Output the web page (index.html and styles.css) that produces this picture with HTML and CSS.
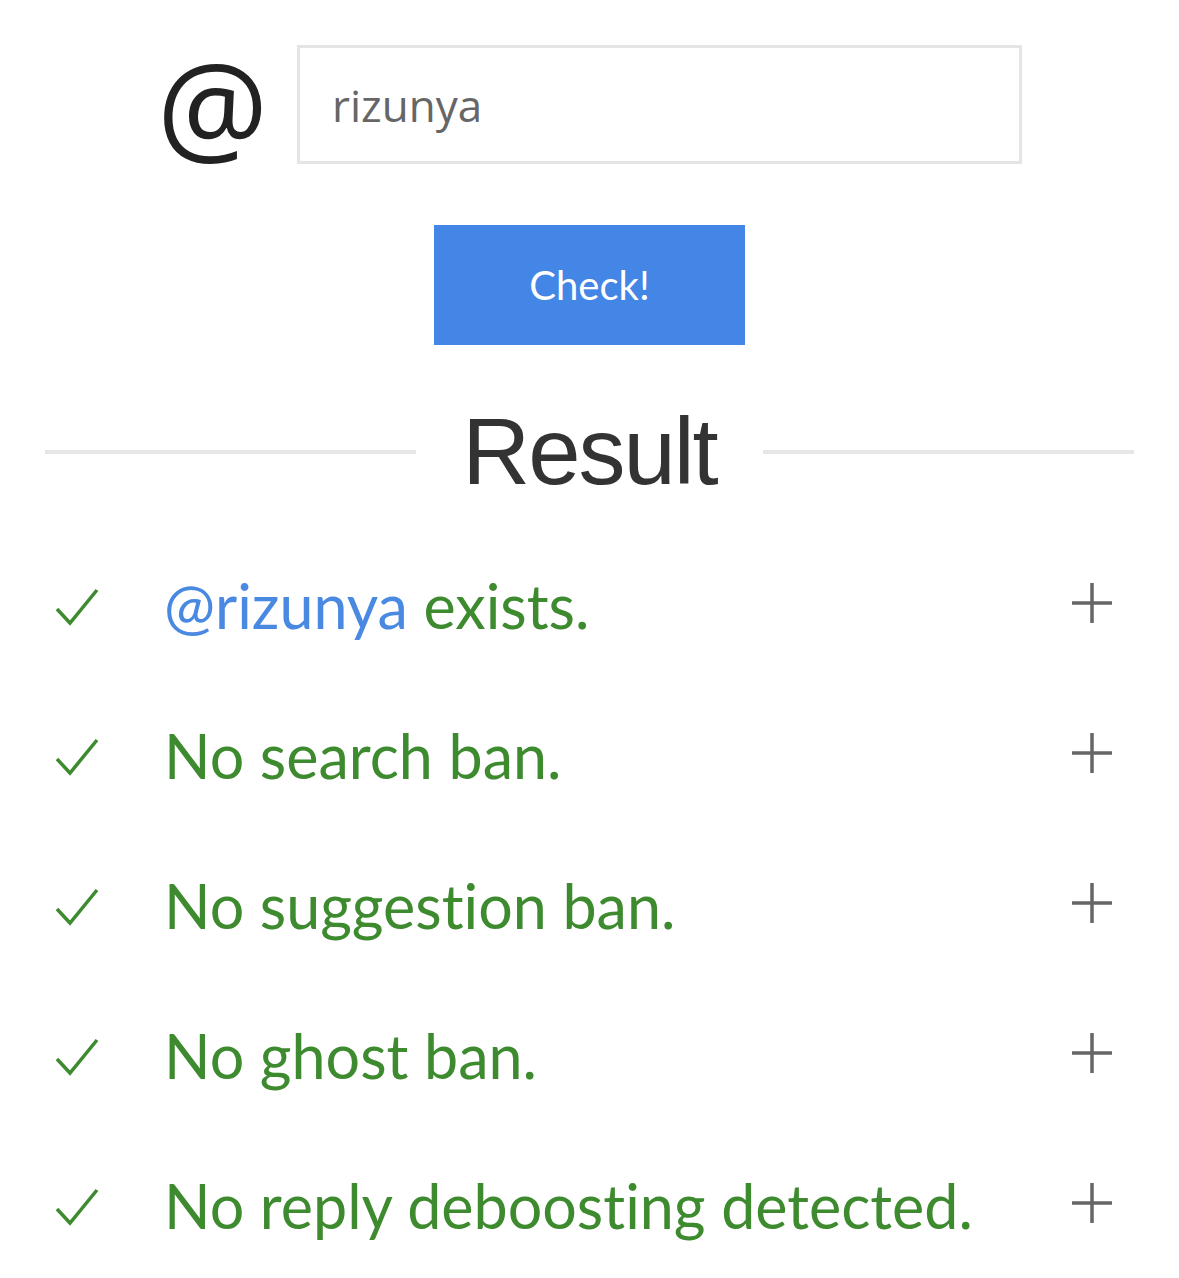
FILE: index.html
```html
<!DOCTYPE html>
<html lang="en">
<head>
<meta charset="utf-8">
<title>Shadowban check</title>
<link rel="stylesheet" href="styles.css">
</head>
<body>
<main class="page">
  <div class="search">
    <span class="at">@</span>
    <div class="input">rizunya</div>
  </div>
  <div class="actions">
    <button class="check" type="button">Check!</button>
  </div>
  <div class="divider">
    <span class="line"></span>
    <h2 class="title">Result</h2>
    <span class="line"></span>
  </div>
  <ul class="results">
    <li class="row">
      <svg class="tick" viewBox="0 0 44 40"><path d="M2 22 L15 36 L42 3"/></svg>
      <span class="text"><span class="user">@rizunya</span> exists.</span>
      <svg class="plus" viewBox="0 0 40 40"><path d="M20 0 V40 M0 20 H40"/></svg>
    </li>
    <li class="row">
      <svg class="tick" viewBox="0 0 44 40"><path d="M2 22 L15 36 L42 3"/></svg>
      <span class="text">No search ban.</span>
      <svg class="plus" viewBox="0 0 40 40"><path d="M20 0 V40 M0 20 H40"/></svg>
    </li>
    <li class="row">
      <svg class="tick" viewBox="0 0 44 40"><path d="M2 22 L15 36 L42 3"/></svg>
      <span class="text">No suggestion ban.</span>
      <svg class="plus" viewBox="0 0 40 40"><path d="M20 0 V40 M0 20 H40"/></svg>
    </li>
    <li class="row">
      <svg class="tick" viewBox="0 0 44 40"><path d="M2 22 L15 36 L42 3"/></svg>
      <span class="text">No ghost ban.</span>
      <svg class="plus" viewBox="0 0 40 40"><path d="M20 0 V40 M0 20 H40"/></svg>
    </li>
    <li class="row">
      <svg class="tick" viewBox="0 0 44 40"><path d="M2 22 L15 36 L42 3"/></svg>
      <span class="text">No reply deboosting detected.</span>
      <svg class="plus" viewBox="0 0 40 40"><path d="M20 0 V40 M0 20 H40"/></svg>
    </li>
  </ul>
</main>
</body>
</html>
```

FILE: styles.css
```css
html, body {
  margin: 0;
  padding: 0;
  background: #ffffff;
}

.page {
  width: 1179px;
  font-family: "Lato", "Open Sans", sans-serif;
  font-variant-ligatures: none;
}

.search {
  display: flex;
  justify-content: center;
  align-items: center;
  gap: 36px;
  padding-top: 45px;
}

.at {
  font-family: "Open Sans", sans-serif;
  font-size: 124px;
  line-height: 119px;
  color: #222222;
  width: 104px;
  text-align: center;
}

.input {
  box-sizing: border-box;
  width: 725px;
  height: 119px;
  border: 3px solid #e5e5e5;
  padding-left: 32px;
  display: flex;
  align-items: center;
  font-family: "Open Sans", sans-serif;
  font-size: 44px;
  color: #666666;
}

.actions {
  display: flex;
  justify-content: center;
  margin-top: 61px;
}

.check {
  width: 311px;
  height: 120px;
  border: none;
  background: #4486e6;
  color: #ffffff;
  font-family: "Lato", sans-serif;
  font-size: 40px;
  padding: 0;
}

.divider {
  display: flex;
  align-items: center;
  padding: 0 45px;
  margin-top: 57px;
}

.line {
  flex: 1;
  height: 4px;
  background: #e6e6e6;
}

.title {
  margin: 0 46px;
  font-family: "Liberation Sans", sans-serif;
  font-weight: 400;
  font-size: 94px;
  line-height: 100px;
  letter-spacing: -2px;
  color: #333333;
}

.results {
  list-style: none;
  margin: 28px 0 0;
  padding: 0 67px 0 55px;
}

.row {
  display: flex;
  align-items: center;
  height: 150px;
}

.tick {
  width: 44px;
  height: 40px;
  fill: none;
  stroke: #3d8a2f;
  stroke-width: 3.5;
  margin-top: 4px;
}

.text {
  flex: 1;
  margin-left: 65px;
  font-size: 61px;
  color: #3d8a2f;
}

.user {
  color: #4a89e2;
}

.plus {
  width: 40px;
  height: 40px;
  fill: none;
  stroke: #666666;
  stroke-width: 3.5;
  margin-top: -4px;
}
```
